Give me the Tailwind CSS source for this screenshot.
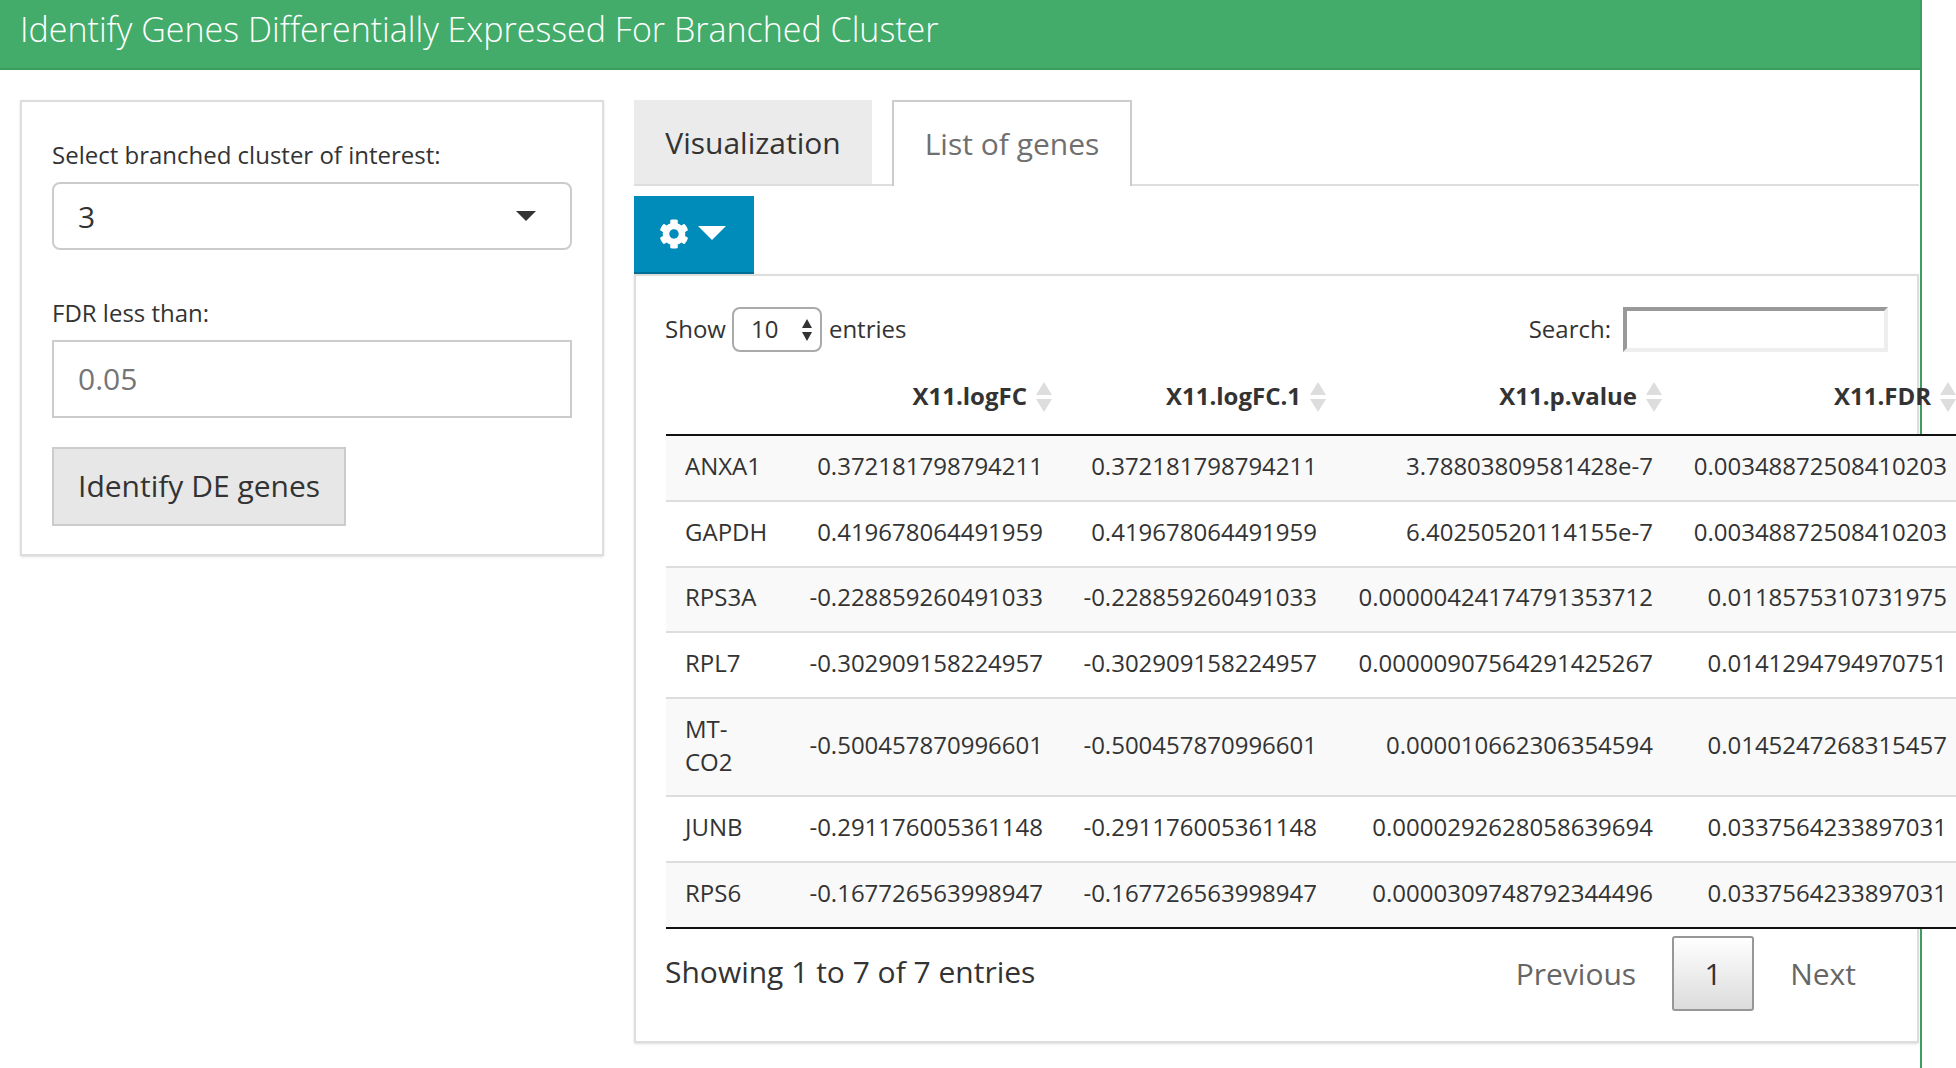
<!DOCTYPE html>
<html lang="en">
  <head>
    <meta charset="UTF-8" />
    <title>Identify Genes Differentially Expressed For Branched Cluster</title>
    <script src="https://cdn.jsdelivr.net/npm/@tailwindcss/browser@4"></script>
  </head>
  <body class="overflow-hidden bg-white font-['Open_Sans',sans-serif] text-[24px] text-[#333]">
    <div class="w-[1922px] h-[1068px] border-r-2 border-[#3f9e63]">
      <!-- Title bar -->
      <header class="h-[70px] pl-[20px] bg-[#43ac6a] border-b-2 border-[#3c9a5f] text-white text-[34px] font-light leading-[58px]">
        Identify Genes Differentially Expressed For Branched Cluster
      </header>

      <div class="flex gap-[30px] pl-[20px] pr-px pt-[30px]">
        <!-- Sidebar -->
        <aside class="w-[584px] h-[456px] shrink-0 border-2 border-[#ddd] shadow-sm px-[30px] pt-[35px]">
          <label class="block leading-[36px]">Select branched cluster of interest:</label>
          <div class="flex items-center justify-between h-[68px] mt-[9px] px-[24px] border-2 border-[#ccc] rounded-[8px] text-[30px]">
            <span>3</span>
            <span class="mr-[10px] w-0 h-0 border-x-[10px] border-x-transparent border-t-[10px] border-t-[#333]"></span>
          </div>
          <label class="block mt-[45px] leading-[36px]">FDR less than:</label>
          <input value="0.05" class="block w-full h-[78px] mt-[9px] px-[24px] pb-[2px] border-2 border-[#ccc] text-[30px] text-[#757575]" />
          <button class="block h-[79px] mt-[29px] px-[24px] pb-[2px] bg-[#e7e7e7] border-2 border-[#ccc] text-[30px]">Identify DE genes</button>
        </aside>

        <!-- Main panel -->
        <main class="flex-1 min-w-0">
          <nav class="flex h-[86px] border-b-2 border-[#ddd] text-[30px]">
            <div class="w-[238px] h-[86px] flex items-center justify-center bg-[#ebebeb] border-b-2 border-[#ddd]">Visualization</div>
            <div class="w-[240px] h-[86px] ml-[20px] pb-[2px] flex items-center justify-center bg-white border-2 border-b-0 border-[#ccc] text-[#6f6f6f]">List of genes</div>
          </nav>

          <button class="flex items-center gap-[9px] w-[120px] h-[78px] mt-[10px] pl-[25px] bg-[#008cba] border-b-2 border-[#007095]">
            <svg viewBox="0 0 512 512" class="w-[30px] h-[30px] fill-white">
              <path d="M487.4 315.7l-42.6-24.6c4.3-23.2 4.3-47 0-70.2l42.6-24.6c4.9-2.8 7.1-8.6 5.5-14-11.1-35.6-30-67.8-54.7-94.6-3.8-4.1-10-5.1-14.8-2.3L380.8 110c-17.9-15.4-38.5-27.3-60.8-35.1V25.8c0-5.6-3.9-10.5-9.4-11.7-36.7-8.2-74.3-7.8-109.2 0-5.5 1.2-9.4 6.1-9.4 11.7V75c-22.2 7.9-42.8 19.8-60.8 35.1L88.7 85.5c-4.9-2.8-11-1.9-14.8 2.3-24.7 26.7-43.6 58.9-54.7 94.6-1.7 5.4.6 11.2 5.5 14L67.3 221c-4.3 23.2-4.3 47 0 70.2l-42.6 24.6c-4.9 2.8-7.1 8.6-5.5 14 11.1 35.6 30 67.8 54.7 94.6 3.8 4.1 10 5.1 14.8 2.3l42.6-24.6c17.9 15.4 38.5 27.3 60.8 35.1v49.2c0 5.6 3.9 10.5 9.4 11.7 36.7 8.2 74.3 7.8 109.2 0 5.5-1.2 9.4-6.1 9.4-11.7v-49.2c22.2-7.9 42.8-19.8 60.8-35.1l42.6 24.6c4.9 2.8 11 1.9 14.8-2.3 24.7-26.7 43.6-58.9 54.7-94.6 1.5-5.5-.7-11.3-5.6-14.1zM256 336c-44.1 0-80-35.9-80-80s35.9-80 80-80 80 35.9 80 80-35.9 80-80 80z" />
            </svg>
            <span class="w-0 h-0 mb-[2px] border-x-[14px] border-x-transparent border-t-[14px] border-t-white"></span>
          </button>

          <section class="h-[769px] border-2 border-[#ddd] shadow-sm pl-[30px] pt-[30px]">
            <!-- Length and search controls -->
            <div class="flex items-center justify-between h-[46px] pr-[29px] -ml-px">
              <div class="flex items-center">
                Show
                <div class="relative w-[90px] h-[45px] ml-[6px] mr-[7px] pl-[17px] flex items-center border-2 border-[#aaa] rounded-[8px]">
                  10
                  <svg viewBox="0 0 12 24" class="absolute right-[7px] top-[9px] w-[12px] h-[24px] fill-[#333]">
                    <path d="M6 1l5 9H1zM1 14h10l-5 9z" />
                  </svg>
                </div>
                entries
              </div>
              <div class="flex items-center gap-[12px]">
                Search:
                <input class="w-[265px] h-[45px] border-4 border-t-[#999] border-l-[#999] border-r-[#eee] border-b-[#eee]" />
              </div>
            </div>

            <!-- Gene table runs past the right edge of the panel -->
            <table class="w-[1301px] table-fixed border-collapse mt-[17px]">
              <colgroup>
                <col class="w-[124px]" />
                <col class="w-[273px]" />
                <col class="w-[274px]" />
                <col class="w-[336px]" />
                <col class="w-[294px]" />
              </colgroup>
              <thead>
                <tr class="h-[66px] border-b-2 border-[#111] text-right font-bold">
                  <th></th>
                  <th class="relative pr-[36px] pb-[11px]">X11.logFC<svg viewBox="0 0 16 30" class="absolute right-[11px] top-[13px] w-[16px] h-[30px] fill-[#ddd]"><path d="M8 0l8 13H0zM0 17h16L8 30z" /></svg></th>
                  <th class="relative pr-[36px] pb-[11px]">X11.logFC.1<svg viewBox="0 0 16 30" class="absolute right-[11px] top-[13px] w-[16px] h-[30px] fill-[#ddd]"><path d="M8 0l8 13H0zM0 17h16L8 30z" /></svg></th>
                  <th class="relative pr-[36px] pb-[11px]">X11.p.value<svg viewBox="0 0 16 30" class="absolute right-[11px] top-[13px] w-[16px] h-[30px] fill-[#ddd]"><path d="M8 0l8 13H0zM0 17h16L8 30z" /></svg></th>
                  <th class="relative pr-[36px] pb-[11px]">X11.FDR<svg viewBox="0 0 16 30" class="absolute right-[11px] top-[13px] w-[16px] h-[30px] fill-[#ddd]"><path d="M8 0l8 13H0zM0 17h16L8 30z" /></svg></th>
                </tr>
              </thead>
              <tbody class="text-right [&_td]:pb-[5px]">
                <tr class="h-[66px] bg-[#f9f9f9] border-t-2 border-[#ddd]">
                  <td class="pl-[19px] text-left">ANXA1</td>
                  <td class="pr-[20px]">0.372181798794211</td>
                  <td class="pr-[20px]">0.372181798794211</td>
                  <td class="pr-[20px]">3.78803809581428e-7</td>
                  <td class="pr-[20px]">0.00348872508410203</td>
                </tr>
                <tr class="h-[66px] bg-white border-t-2 border-[#ddd]">
                  <td class="pl-[19px] text-left">GAPDH</td>
                  <td class="pr-[20px]">0.419678064491959</td>
                  <td class="pr-[20px]">0.419678064491959</td>
                  <td class="pr-[20px]">6.40250520114155e-7</td>
                  <td class="pr-[20px]">0.00348872508410203</td>
                </tr>
                <tr class="h-[65px] bg-[#f9f9f9] border-t-2 border-[#ddd]">
                  <td class="pl-[19px] text-left">RPS3A</td>
                  <td class="pr-[20px]">-0.228859260491033</td>
                  <td class="pr-[20px]">-0.228859260491033</td>
                  <td class="pr-[20px]">0.00000424174791353712</td>
                  <td class="pr-[20px]">0.0118575310731975</td>
                </tr>
                <tr class="h-[66px] bg-white border-t-2 border-[#ddd]">
                  <td class="pl-[19px] text-left">RPL7</td>
                  <td class="pr-[20px]">-0.302909158224957</td>
                  <td class="pr-[20px]">-0.302909158224957</td>
                  <td class="pr-[20px]">0.00000907564291425267</td>
                  <td class="pr-[20px]">0.0141294794970751</td>
                </tr>
                <tr class="h-[98px] bg-[#f9f9f9] border-t-2 border-[#ddd]">
                  <td class="pl-[19px] text-left leading-[33px]">MT-<br />CO2</td>
                  <td class="pr-[20px]">-0.500457870996601</td>
                  <td class="pr-[20px]">-0.500457870996601</td>
                  <td class="pr-[20px]">0.000010662306354594</td>
                  <td class="pr-[20px]">0.0145247268315457</td>
                </tr>
                <tr class="h-[66px] bg-white border-t-2 border-[#ddd]">
                  <td class="pl-[19px] text-left">JUNB</td>
                  <td class="pr-[20px]">-0.291176005361148</td>
                  <td class="pr-[20px]">-0.291176005361148</td>
                  <td class="pr-[20px]">0.0000292628058639694</td>
                  <td class="pr-[20px]">0.0337564233897031</td>
                </tr>
                <tr class="h-[66px] bg-[#f9f9f9] border-t-2 border-b-2 border-t-[#ddd] border-b-[#111]">
                  <td class="pl-[19px] text-left">RPS6</td>
                  <td class="pr-[20px]">-0.167726563998947</td>
                  <td class="pr-[20px]">-0.167726563998947</td>
                  <td class="pr-[20px]">0.0000309748792344496</td>
                  <td class="pr-[20px]">0.0337564233897031</td>
                </tr>
              </tbody>
            </table>

            <!-- Footer -->
            <div class="flex justify-between pr-[30px] pt-[7px]">
              <div class="pt-[13px] -ml-px text-[30px]">Showing 1 to 7 of 7 entries</div>
              <div class="flex items-center text-[30px] text-[#666]">
                <span class="mr-[36px]">Previous</span>
                <span class="w-[82px] h-[75px] flex items-center justify-center border-2 border-[#979797] rounded-[3px] bg-gradient-to-b from-white to-[#dcdcdc] text-[#333]">1</span>
                <span class="ml-[36px] mr-[31px]">Next</span>
              </div>
            </div>
          </section>
        </main>
      </div>
    </div>
  </body>
</html>
